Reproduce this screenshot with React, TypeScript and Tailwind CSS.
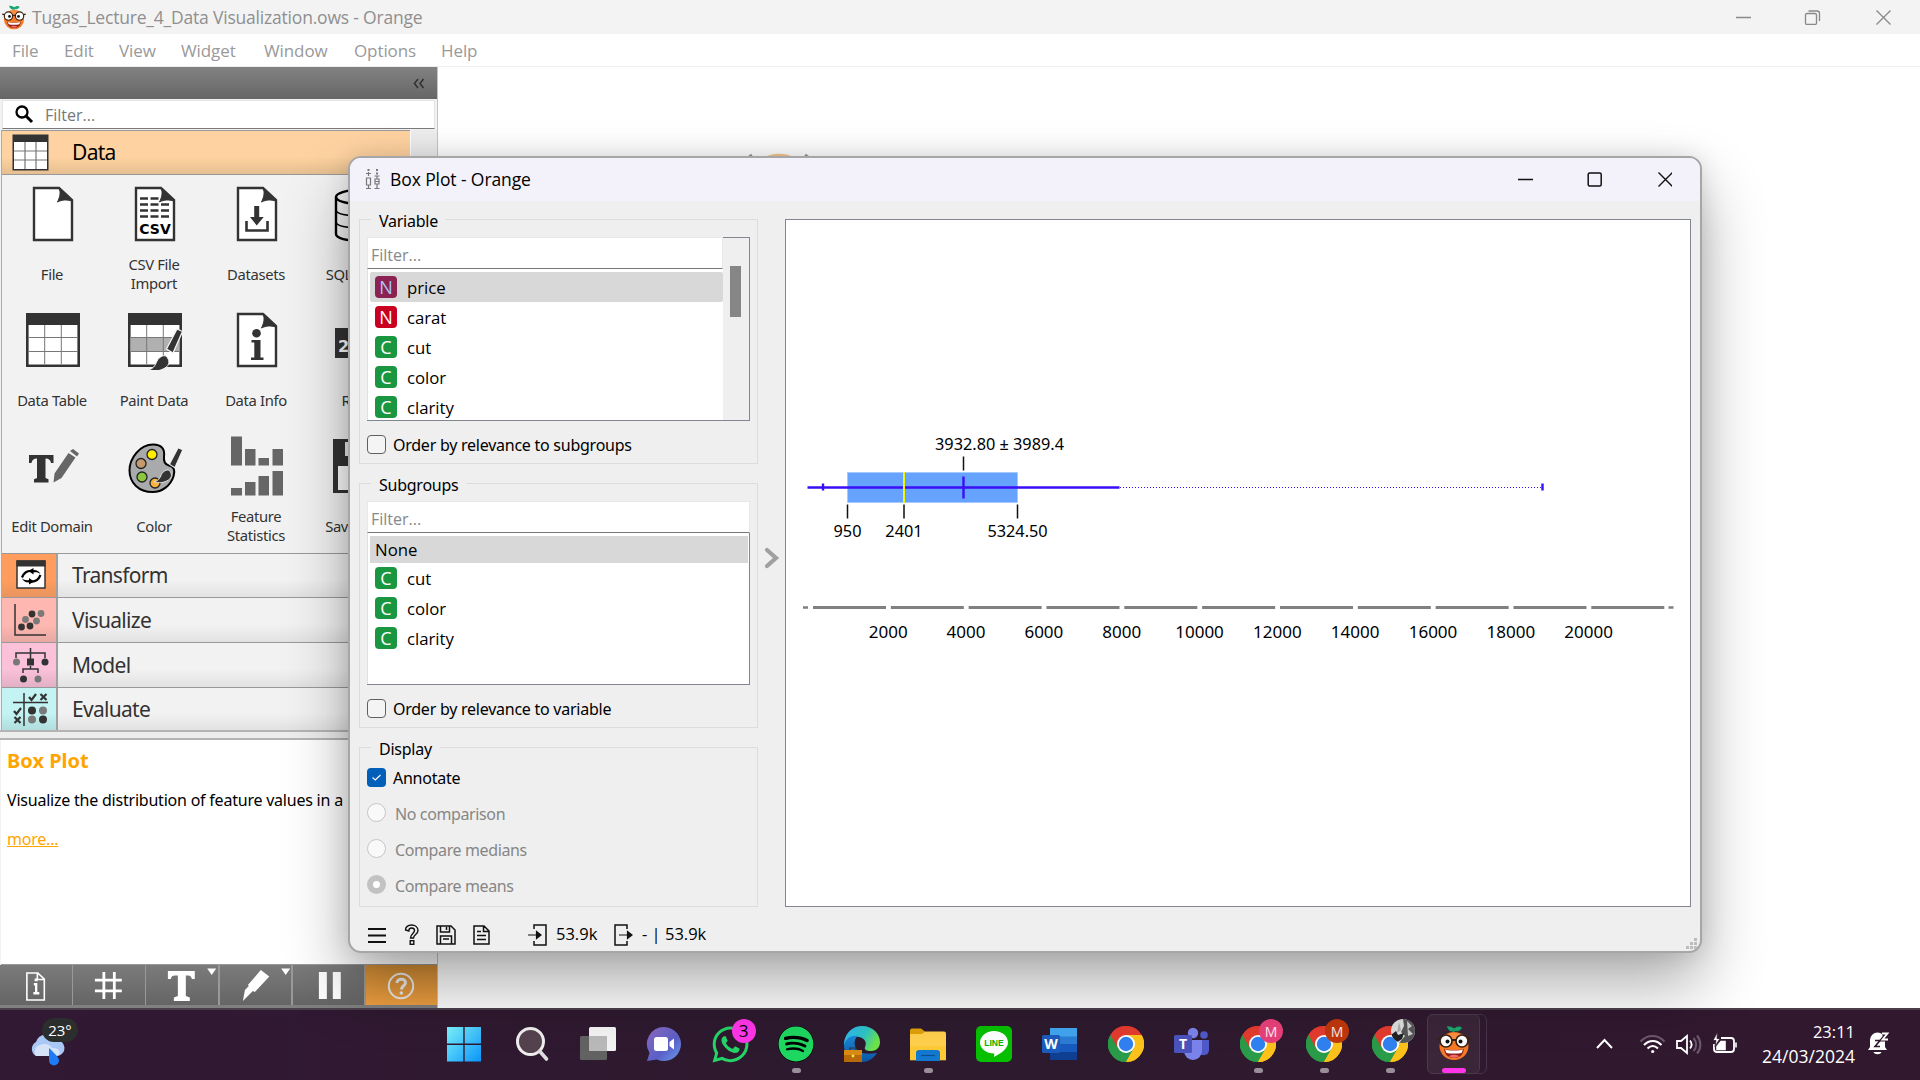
import React from "react";
import { FaWhatsapp, FaSpotify } from "react-icons/fa";

const INK = "#333333";

function OrangeFace({ className }: { className: string }) {
  return (
    <svg viewBox="0 0 34 36" className={className}>
      <path d="M17 7V3M17 5c-2-3-5-3-6-3 1 3 3 4 6 4M18 4c2-2 5-2 6-1-1 2-4 3-6 2" stroke="#16a36a" strokeWidth="1.6" fill="#22b573" />
      <ellipse cx="17" cy="21" rx="14.500" ry="14" fill="#f77a26" />
      <ellipse cx="17" cy="12" rx="9" ry="4" fill="#ff8f40" />
      <circle cx="9" cy="16" r="6" fill="#fff" stroke="#3b2314" strokeWidth="1.700" />
      <circle cx="25" cy="16" r="6" fill="#fff" stroke="#3b2314" strokeWidth="1.700" />
      <path d="M15 15h4M0 13l3.500 1M34 13l-3.500 1" stroke="#3b2314" strokeWidth="1.800" />
      <circle cx="10.500" cy="16.500" r="2" fill="#111" />
      <circle cx="23.500" cy="16.500" r="2" fill="#111" />
      <path d="M7 24c3 1.500 17 1.500 20 0-1 6.500-5 9-10 9s-9-2.500-10-9z" fill="#8c1f1a" />
      <path d="M8 24.500c3 1.400 15 1.400 18 0l-1.300 3.200c-4 1.200-11.400 1.200-15.400 0z" fill="#fff" />
      <path d="M12 31.300c2-2 8-2 10 0-3 2-7 2-10 0z" fill="#f26b6b" />
    </svg>
  );
}

function Sheet({ children }: { children?: React.ReactNode }) {
  return (
    <>
      <path d="M11 4h25l13 12v40H11z" fill="#fff" stroke={INK} strokeWidth="2.4" />
      <path d="M36 4c2 4 1 9-1.500 14 5-2.500 9-2.500 14.500-1L36 4z" fill={INK} stroke={INK} strokeWidth="1" />
      {children}
    </>
  );
}

function TableGrid({ painted }: { painted?: boolean }) {
  return (
    <>
      <rect x="3" y="3" width="54" height="54" fill={INK} />
      <rect x="5.600" y="15" width="48.800" height="39.500" fill="#fff" />
      {painted && <rect x="5.600" y="27.500" width="48.800" height="14" fill="#b0b0b0" />}
      <path d="M5.600 27.500h48.800M5.600 41.500h48.800M21.700 15v39.500M38.300 15v39.500" stroke="#777" strokeWidth="1" />
    </>
  );
}

function Brush({ transform }: { transform?: string }) {
  return (
    <g transform={transform}>
      <path d="M52 19l5.500 2.500L48 43l-6.500-4z" fill={INK} stroke="#f2f2f2" strokeWidth="1.300" />
      <path d="M41 46c4 4 4 9-1 12-5 3-11 4-17 2 5-1 7-4 9-9 2-4 6-6 9-5z" fill={INK} stroke="#f2f2f2" strokeWidth="1" />
    </g>
  );
}

const icons: Record<string, React.ReactNode> = {
  File: <Sheet />,
  "CSV File Import": (
    <Sheet>
      <path d="M15 14.500h19M15 20.500h29M15 26.500h29M15 32.500h29" stroke={INK} strokeWidth="2.600" strokeDasharray="8 2.500" />
      <text x="30" y="50" textAnchor="middle" className="font-['DejaVu_Sans',sans-serif] text-[14px] font-bold">CSV</text>
    </Sheet>
  ),
  Datasets: (
    <Sheet>
      <path d="M27.200 22h5v11h4.500L29.700 41.500 23 33h4.200z" fill={INK} />
      <path d="M19.500 37v9.500h21V37" fill="none" stroke={INK} strokeWidth="2.600" />
    </Sheet>
  ),
  "SQL Table": (
    <g fill="none" stroke="#000" strokeWidth="2">
      <ellipse cx="30" cy="13" rx="23" ry="7" strokeWidth="2.400" />
      <path d="M7 13v37c0 9 46 9 46 0V13" strokeWidth="2.400" />
      <path d="M7 26c0 8 46 8 46 0M7 38c0 8 46 8 46 0" strokeWidth="1.500" />
    </g>
  ),
  "Data Table": <TableGrid />,
  "Paint Data": (
    <>
      <TableGrid painted />
      <Brush />
    </>
  ),
  "Data Info": (
    <Sheet>
      <circle cx="29.500" cy="23.300" r="4.300" fill={INK} />
      <path d="M24.500 30h9v17.500h3V50H24v-2.500h3.300v-15h-2.800z" fill={INK} />
    </Sheet>
  ),
  Rank: (
    <>
      <rect x="6" y="18" width="50" height="30" fill={INK} />
      <text x="9" y="42" fill="#fff" className="font-['DejaVu_Sans',sans-serif] text-[16px] font-bold">2</text>
    </>
  ),
  "Edit Domain": (
    <>
      <path d="M6 19h24.500v8h-2.500c-.5-3-2-4.500-5.500-4.500V42l3 1.300v3.200H11v-3.200l3-1.300V22.500c-3.500 0-5 1.500-5.500 4.500H6z" fill={INK} />
      <path d="M45.500 17l7 4.500L38.500 42l-8 4.500 1-9zM47 15l3-2 6 4.500-2 3z" fill="#666" />
    </>
  ),
  Color: (
    <>
      <path d="M28 8.500c9 0 12 5 11 12-.6 5 1 8 5 9 5 1 6.500 5 4.500 11-3 9-11 15.500-21 15.500C14 56 4.500 47 4.500 34.500S15 8.500 28 8.500z" fill="#a9aaac" stroke="#000" strokeWidth="2" />
      <g stroke="#222" strokeWidth="1.300">
        <circle cx="27" cy="18.500" r="5" fill="#ffed00" />
        <circle cx="16" cy="27.500" r="5" fill="#c69a6d" />
        <circle cx="17" cy="41" r="5" fill="#8cc63f" />
        <circle cx="30" cy="47" r="5" fill="#fbb03b" />
      </g>
      <Brush transform="translate(10 -4) scale(.83)" />
    </>
  ),
  "Feature Statistics": (
    <g fill="#666">
      <path d="M4 .500h11v29H4zM18 13h10.500v16.500H18zM31.500 22H42v7.500H31.500zM45.500 13H56v16.500H45.500z" />
      <path d="M4 52h11v7.500H4zM18 46h10.500v13.500H18zM31.500 40H42v19.500H31.500zM45.500 35H56v24.500H45.500z" />
    </g>
  ),
  "Save Data": (
    <>
      <rect x="4" y="3" width="54" height="54" fill={INK} />
      <rect x="16" y="6" width="30" height="14" fill="#eee" />
      <rect x="9" y="30" width="43" height="24" fill="#fff" />
    </>
  ),
};

function Palette() {
  const cells = Object.keys(icons);
  return (
    <div className="grid w-[408px] grid-cols-4 grid-rows-[repeat(3,126px)]">
      {cells.map((name) => (
        <div key={name} className="flex flex-col items-center">
          <div className="flex h-[78px] items-center">
            <svg width="60" height="60" viewBox="0 0 60 60">{icons[name]}</svg>
          </div>
          <div className="flex h-[42px] w-[84px] -translate-x-px items-center justify-center text-center text-[14.800px] leading-[19px] tracking-[-0.350px] text-[#333]">{name}</div>
        </div>
      ))}
    </div>
  );
}

function Categories() {
  const rows = [
    {
      name: "Transform", h: "h-[44px]", bg: "bg-linear-to-b from-[#ff9d5e] from-60% to-[#e8945e]",
      icon: (
        <>
          <rect x="4" y="3" width="28" height="27" fill="#fff" stroke={INK} strokeWidth="1.500" />
          <rect x="3.500" y="2.500" width="29" height="6" fill={INK} />
          <path d="M9 19.500c2-5 5-7 10-6.500" fill="none" stroke="#000" strokeWidth="2.200" />
          <path d="M27.500 17c-2 5-5 7-10 6.500" fill="none" stroke="#000" strokeWidth="2.200" />
          <path d="M15.500 13l5-3v2c4 0 6 2 7 4-2-1.500-4-2-7-1.500v2zM21 23.500l-5 3v-2c-4 0-6-2-7-4 2 1.500 4 2 7 1.500v-2z" />
        </>
      ),
    },
    {
      name: "Visualize", h: "h-[45px]", bg: "bg-linear-to-b from-[#ffb7b1] from-60% to-[#e8a8a2]",
      icon: (
        <>
          <path d="M2 2v31h31" fill="none" stroke={INK} strokeWidth="1.500" />
          <g fill={INK}><circle cx="8.500" cy="25" r="3.400" /><circle cx="17" cy="24" r="3.400" /><circle cx="19" cy="12" r="3.400" /></g>
          <g fill="#7a7a7a"><circle cx="12.500" cy="17.500" r="3.400" /><circle cx="23.500" cy="19" r="3.400" /><circle cx="28" cy="11.500" r="3.400" /></g>
        </>
      ),
    },
    {
      name: "Model", h: "h-[45px]", bg: "bg-linear-to-b from-[#fac1d9] from-60% to-[#e3b0c6]",
      icon: (
        <>
          <path d="M3 11V6h29v5M17.500 1v12M10 26v-4h15v4M17.500 19v3" fill="none" stroke={INK} strokeWidth="1.500" />
          <rect x="14" y="11.500" width="7" height="7" fill={INK} />
          <circle cx="32" cy="15" r="3.500" fill={INK} /><circle cx="10.500" cy="32" r="3.500" fill={INK} />
          <circle cx="3.500" cy="15" r="3.500" fill="#777" /><circle cx="25" cy="32" r="3.500" fill="#777" />
        </>
      ),
    },
    {
      name: "Evaluate", h: "h-[43px]", bg: "bg-linear-to-b from-[#c3f3f3] from-60% to-[#b0dddd]",
      icon: (
        <>
          <path d="M11 2v33M0 11.500h35" stroke={INK} strokeWidth="1.500" />
          <g fill="none" stroke={INK} strokeWidth="2.200">
            <path d="M16 6l2.500 3L23 3M27.500 3l6 6M33.500 3l-6 6M1 20l2.500 3L8 17M1.500 26l6 6M7.500 26l-6 6" />
          </g>
          <circle cx="19" cy="19.500" r="4" fill={INK} /><circle cx="30" cy="28.500" r="4" fill={INK} />
          <circle cx="30" cy="19.500" r="4" fill="#7a7a7a" /><circle cx="19" cy="28.500" r="4" fill="#7a7a7a" />
        </>
      ),
    },
  ];
  return (
    <>
      {rows.map((r) => (
        <div key={r.name} className={`flex border-t border-[#999] ${r.h}`}>
          <div className={`flex w-[56px] items-center justify-center border-r-2 border-[#a0a0a0] pl-[3px] ${r.bg}`}>
            <svg width="36" height="36" viewBox="0 0 36 36">{r.icon}</svg>
          </div>
          <div className="flex flex-1 items-center bg-linear-to-b from-[#f2f2f2] from-60% to-[#e2e2e2] pt-px pl-[14px] text-[21px] tracking-[-0.700px] text-[#333]">{r.name}</div>
        </div>
      ))}
    </>
  );
}

function DockToolbar() {
  const glyphs = [
    <path d="M27 8h11l6.500 6v21H27zM37.500 8v6.500h7" fill="none" stroke="#fff" strokeWidth="1.600" />,
    <path d="M31 7v27M41.500 7v27M22 15h27M22 26h27" stroke="#fff" strokeWidth="2.800" />,
    <path d="M22 6h27v8h-3c-.5-3-2-3.500-6-3.500V31l4 1.500V36H28v-3.500l4-1.500V10.500c-5 0-6.500.5-7 3.500h-3z" fill="#fff" />,
    <path d="M41 5l8.500 6.500L35 27l-2-1-10 10 2-11 4-4-1-1z" fill="#fff" />,
    <path d="M26 7h8v27h-8zM40 7h8v27h-8z" fill="#fff" />,
  ];
  return (
    <div className="flex h-[43px] border-b-[3px] border-[#808080] bg-[#999]">
      {glyphs.map((g, i) => (
        <div key={i} className="mr-[1.500px] flex w-[71.700px] items-center justify-center bg-linear-to-b from-[#7b7b7b] to-[#656565]">
          <svg width="72" height="40" viewBox="0 0 72 40">
            {g}
            {i === 0 && <path d="M34 18h3.500v9h2v2.500H33.500V27h1.700v-6.500H34zM34.800 13.500h3v2.800h-3z" fill="#fff" />}
            {(i === 2 || i === 3) && <path d="M61.500 3.500h9L66 10z" fill="#fff" />}
          </svg>
        </div>
      ))}
      <div className="flex flex-1 items-center justify-center bg-linear-to-b from-[#cf8c35] to-[#f0a040]">
        <svg width="28" height="28" viewBox="0 0 28 28" className="mt-[2px]">
          <circle cx="14" cy="14" r="12.200" fill="none" stroke="#eee" strokeWidth="2" />
          <path d="M10 11c0-5 8.500-5 8.500-.5 0 3-4 3.500-4 7" fill="none" stroke="#eee" strokeWidth="3" />
          <circle cx="14.300" cy="21" r="1.800" fill="#eee" />
        </svg>
      </div>
    </div>
  );
}

function Dock() {
  return (
    <aside className="flex w-[438px] flex-col border-r border-[#c4c4c4] bg-[#f2f2f2] font-['Noto_Sans',sans-serif]">
      <div className="flex h-[32px] items-center justify-end bg-linear-to-b from-[#828282] to-[#666] pr-[12px]">
        <svg width="12" height="11" viewBox="0 0 12 11" className="mt-px">
          <path d="M5 1L1.500 5.500 5 10M10.500 1L7 5.500l3.500 4.500" fill="none" stroke="#333" strokeWidth="1.600" />
        </svg>
      </div>
      <div className="mx-[2px] mt-px flex h-[29px] items-center border border-b-[#7a7a7a] border-[#e4e4e4] bg-white pl-[12px] font-['Open_Sans',sans-serif]">
        <svg width="19" height="19" viewBox="0 0 19 19">
          <circle cx="7" cy="7" r="5.500" fill="none" stroke="#000" strokeWidth="2.300" />
          <path d="M11 11l6 6" stroke="#000" strokeWidth="3" />
        </svg>
        <span className="pl-[11px] text-[16px] text-[#777]">Filter...</span>
      </div>
      <div className="mt-px ml-px flex h-[600px] flex-col border-l border-[#a9adad]">
        <div className="flex h-[45px]">
          <div className="flex w-[408px] items-center border-y border-[#999] bg-linear-to-b from-[#ffd3a1] from-60% to-[#e6bf90] pl-[10px] text-[21px] tracking-[-0.700px] text-black">
            <svg width="37" height="37" viewBox="0 0 37 37">
              <rect x=".5" y=".5" width="36" height="36" fill={INK} />
              <rect x="2" y="8" width="33" height="27" fill="#fff" />
              <path d="M2 17h33M2 26h33M13 8v27M24 8v27" stroke="#777" strokeWidth="1.200" />
            </svg>
            <span className="pl-[23px]">Data</span>
          </div>
          <div className="flex flex-1 justify-center border-l border-white bg-[#ececec] pt-[26px]">
            <div className="h-[6px] w-[10px] bg-[#777]" />
          </div>
        </div>
        <div className="h-[378px]"><Palette /></div>
        <Categories />
      </div>
      <div className="h-[10px] border-y-2 border-[#b4b4b4] bg-[#ededed]" />
      <div className="ml-px flex-1 border-b border-[#999] bg-white px-[6px] pt-[10px]">
        <div className="text-[20px] leading-[22px] font-bold text-[#ffa500]">Box Plot</div>
        <div className="pt-[16px] text-[16px] leading-[24px] tracking-[-0.220px] whitespace-nowrap text-black">Visualize the distribution of feature values in a</div>
        <div className="pt-[15px] text-[16px] leading-[24px] tracking-[-0.220px] text-[#ffa500] underline">more...</div>
      </div>
      <DockToolbar />
    </aside>
  );
}

function VarRow({ kind, name, selected }: { kind: "N" | "C"; name: string; selected?: boolean }) {
  const tint = kind === "C" ? "bg-[#1a9641] text-white" : selected ? "bg-[#8b2252] text-[#a9c8f5]" : "bg-[#ca0020] text-white";
  return (
    <div className={`flex h-[30px] items-center rounded-[2px] pl-[5px] ${selected ? "bg-[#d8d8d8]" : ""}`}>
      <div className={`flex size-[22px] items-center justify-center rounded-[4px] text-[18px] leading-[22px] ${tint}`}>{kind}</div>
      <span className="pt-[2px] pl-[10px] text-[16.800px] tracking-[-0.050px]">{name}</span>
    </div>
  );
}

function Group({ title, className, children }: { title: string; className: string; children: React.ReactNode }) {
  return (
    <fieldset className={`border border-[#dcdcdc] px-[7px] ${className}`}>
      <legend className="ml-[4px] h-[20px] px-[8px] text-[16px] leading-[24px] tracking-[-0.250px]">{title}</legend>
      {children}
    </fieldset>
  );
}

function FilterBox() {
  return (
    <div className="flex h-[32px] items-center border border-[#e8e8e8] border-b-[#777] bg-white pt-[3px] pl-[3px] font-['Open_Sans',sans-serif] text-[16px] text-[#888]">Filter...</div>
  );
}

function Check({ label, checked }: { label: string; checked?: boolean }) {
  return (
    <label className="flex items-center gap-[7px] tracking-[-0.250px]">
      {checked ? (
        <span className="flex size-[19px] items-center justify-center rounded-[4px] bg-[#005fb8]">
          <svg width="9" height="7" viewBox="0 0 9 7"><path d="M.5 3.500L3.300 6 8.500 1" fill="none" stroke="#fff" strokeWidth="1.100" /></svg>
        </span>
      ) : (
        <span className="size-[19px] rounded-[4px] border border-[#606060] bg-[#f4f4f4]" />
      )}
      <span className="pt-[2px] leading-[20px]">{label}</span>
    </label>
  );
}

function Radio({ label, on }: { label: string; on?: boolean }) {
  return (
    <label className="flex h-[36px] items-center gap-[9px] tracking-[-0.380px] text-[#868686]">
      {on ? (
        <span className="size-[19px] rounded-full border-[6px] border-[#c2c2c2] bg-white" />
      ) : (
        <span className="size-[19px] rounded-full border border-[#c6c6c6] bg-[#f9f9f9]" />
      )}
      <span className="pt-[3px] leading-[20px]">{label}</span>
    </label>
  );
}

function BoxChart() {
  const ticks = Array.from({ length: 10 }, (_, i) => i);
  return (
    <svg width="903" height="686" viewBox="786 220 903 686" className="block font-['Noto_Sans',sans-serif]">
      <rect x="847.500" y="472.500" width="170" height="30" fill="#66a3ff" stroke="#9cc4ff" strokeWidth=".6" />
      <g stroke="#3a0ff5">
        <path d="M807.500 487.500H1119.500M823 483.500v7M963.500 476.500v22M1542.500 483.500v7" strokeWidth="2.400" />
        <path d="M1120 487.500H1541" strokeWidth="1" strokeDasharray="1 2" />
      </g>
      <path d="M904 472v31" stroke="#f5f500" strokeWidth="2" />
      <path d="M847.500 504.500v14M904 504.500v14M1017.500 504.500v14M963.500 456.500v14" stroke="#111" strokeWidth="1.500" />
      <g textAnchor="middle" className="text-[16.300px]">
        <text x="847.500" y="537">950</text>
        <text x="904" y="537">2401</text>
        <text x="1017.500" y="537">5324.50</text>
        <text x="999.500" y="450">3932.80 ± 3989.4</text>
      </g>
      <path d="M803 607.500h5M1668.500 607.500h5" stroke="#808080" strokeWidth="2.600" />
      {Array.from({ length: 11 }, (_, i) => (
        <path key={i} d={`M${813 + i * 77.830} 607.500h73`} stroke="#808080" strokeWidth="3" />
      ))}
      <g textAnchor="middle" className="text-[17px]">
        {ticks.map((i) => (
          <text key={i} x={888.2 + i * 77.83} y="638">{(i + 1) * 2000}</text>
        ))}
      </g>
    </svg>
  );
}

function StatusBar() {
  return (
    <div className="flex h-[41px] items-center pt-[8px] pl-[18px] font-['Open_Sans',sans-serif] text-[16.500px]">
      <svg width="18" height="16" viewBox="0 0 18 16"><path d="M0 2h18M0 8.500h18M0 15h18" stroke="#111" strokeWidth="2" /></svg>
      <svg width="16" height="22" viewBox="0 0 16 22" className="ml-[18px]">
        <path d="M1.500 6C1.500 3 4 1 7.500 1s6.500 2 6.500 5.500c0 4-4.500 4-4.500 7.500h-3c0-4.500 4-4.500 4-7.500C10.500 4.800 9 4 7.500 4S4.800 5 4.800 7z" fill="none" stroke="#111" strokeWidth="1.400" />
        <rect x="6.200" y="16.700" width="3.600" height="3.600" fill="none" stroke="#111" strokeWidth="1.400" />
      </svg>
      <svg width="20" height="20" viewBox="0 0 20 20" className="ml-[16px]">
        <path d="M1 1h14l4 4v14H1zM4.500 1v6h9V1M4.500 19v-8h11v8M10.500 2v3M7 14h6" fill="none" stroke="#111" strokeWidth="1.500" />
      </svg>
      <svg width="17" height="20" viewBox="0 0 17 20" className="ml-[17px]">
        <path d="M1 1h10l5 5v13H1zM10.500 1v5.500H16M4 6.500h4M4 10.500h9M4 14.500h9" fill="none" stroke="#111" strokeWidth="1.500" />
      </svg>
      <svg width="20" height="22" viewBox="0 0 20 22" className="ml-[38px]">
        <path d="M6 5V1h12v20H6v-4" fill="none" stroke="#111" strokeWidth="1.500" />
        <path d="M0 11h10M8.500 7.500l4.500 3.500-4.500 3.500z" fill="#111" stroke="#111" strokeWidth="1.200" />
      </svg>
      <span className="w-[66px] pl-[8px]">53.9k</span>
      <svg width="20" height="22" viewBox="0 0 20 22">
        <path d="M13 5V1H1v20h12v-4" fill="none" stroke="#111" strokeWidth="1.500" />
        <path d="M5 11h10M13.500 7.500l4.500 3.500-4.500 3.500z" fill="#111" stroke="#111" strokeWidth="1.200" />
      </svg>
      <span className="pl-[8px] whitespace-pre">- | 53.9k</span>
      <svg width="12" height="12" viewBox="0 0 12 12" className="mt-[18px] mr-[2px] ml-auto">
        <path d="M8 0h3v3H8zM4 4h3v3H4zM8 4h3v3H8zM0 8h3v3H0zM4 8h3v3H4zM8 8h3v3H8z" fill="#bdbdbd" />
      </svg>
    </div>
  );
}

function Dialog() {
  return (
    <section className="absolute top-[156px] left-[348px] flex h-[797px] w-[1354px] flex-col overflow-hidden rounded-[13px] border-2 border-[#a6a6a6] bg-[#efefef] font-['Noto_Sans',sans-serif] text-[16px] text-black shadow-[0_32px_64px_rgba(0,0,0,0.32),0_0_24px_rgba(0,0,0,0.12)]">
      <header className="flex h-[43px] items-center bg-[#f3f1f9] pb-[2px] pl-[15px] font-['Open_Sans',sans-serif]">
        <svg width="16" height="22" viewBox="0 0 16 22">
          <path d="M3.500 4v4M1 5.500h5M1.500 10h4v7h-4zM3.500 17v3M1 20.500h5M12 8v3M10 11h4v5h-4zM9.500 13.500h5M12 16v4M9.500 20.500h5M9.500 8h5" fill="none" stroke="#777" strokeWidth="1.200" />
          <path d="M2.500 1h2v2h-2zM11 1h2v2h-2zM11 4.500h2v2h-2z" fill="#777" />
        </svg>
        <span className="pt-px pl-[9px] text-[17.500px] tracking-[-0.100px]">Box Plot - Orange</span>
        <svg width="154" height="16" viewBox="0 0 154 16" className="mr-[28px] ml-auto">
          <path d="M0 8.500h15M140.500 1.500l14 14M154.500 1.500l-14 14" stroke="#111" strokeWidth="1.400" />
          <rect x="70.200" y="2" width="13" height="13" rx="1.500" fill="none" stroke="#111" strokeWidth="1.500" />
        </svg>
      </header>
      <div className="flex h-[709px] pl-[9px]">
        <div className="flex w-[399px] flex-col gap-[9px] pt-[8px]">
          <Group title="Variable" className="h-[255px]">
            <div className="mt-[7px] flex h-[185px] border-b border-[#82868f]">
              <div className="mt-px flex-1 overflow-hidden">
                <FilterBox />
                <div className="border-l border-[#e0e0e0] bg-white pt-[3px] pl-[2px] font-['Open_Sans',sans-serif]">
                  <VarRow kind="N" name="price" selected />
                  <VarRow kind="N" name="carat" />
                  <VarRow kind="C" name="cut" />
                  <VarRow kind="C" name="color" />
                  <VarRow kind="C" name="clarity" />
                </div>
              </div>
              <div className="mt-px flex w-[27px] justify-center border-t border-r border-[#82868f] pt-[28px] pr-[2px]">
                <div className="h-[51px] w-[11px] bg-[#868686]" />
              </div>
            </div>
            <div className="mt-[12px]"><Check label="Order by relevance to subgroups" /></div>
          </Group>
          <Group title="Subgroups" className="h-[255px]">
            <div className="mt-[8px] h-[184px] border-b border-[#82868f]">
              <FilterBox />
              <div className="h-[151px] border-r border-l border-r-[#82868f] border-l-[#e0e0e0] bg-white pt-[3px] pr-px pl-[2px] font-['Open_Sans',sans-serif]">
                <div className="flex h-[27px] items-center bg-[#d8d8d8] pl-[5px] text-[16.800px]">None</div>
                <VarRow kind="C" name="cut" />
                <VarRow kind="C" name="color" />
                <VarRow kind="C" name="clarity" />
              </div>
            </div>
            <div className="mt-[12px]"><Check label="Order by relevance to variable" /></div>
          </Group>
          <Group title="Display" className="h-[170px]">
            <div className="pt-[9px] pb-[6px]"><Check label="Annotate" checked /></div>
            <Radio label="No comparison" />
            <Radio label="Compare medians" />
            <Radio label="Compare means" on />
          </Group>
        </div>
        <div className="flex w-[27px] items-center justify-center">
          <svg width="16" height="24" viewBox="0 0 16 24" className="mt-[5px]">
            <path d="M3 4l9 8-9 8" fill="none" stroke="#a0a0a0" strokeWidth="4.200" strokeLinecap="round" />
          </svg>
        </div>
        <div className="mt-[18px] h-[688px] w-[906px] border border-[#82868f] bg-white">
          <BoxChart />
        </div>
      </div>
      <StatusBar />
    </section>
  );
}

function Chrome() {
  return (
    <svg width="36" height="36" viewBox="0 0 36 36">
      <path d="M18 18L2.400 9A18 18 0 0 1 33.600 9z" fill="#e33b2e" />
      <path d="M18 18L33.600 9A18 18 0 0 1 18 36z" fill="#fcc21b" />
      <path d="M18 18V36A18 18 0 0 1 2.400 9z" fill="#2a9b48" />
      <path d="M18 9h15.600L36 18 25.800 22.500 18 36V26z" fill="#fcc21b" />
      <path d="M2.400 9l7.800 13.500L18 27l7.800-4.500L18 36A18 18 0 0 1 2.400 9z" fill="#2a9b48" />
      <path d="M18 9h15.600A18 18 0 0 0 2.400 9l7.800 13.500z" fill="#e33b2e" />
      <path d="M33.600 9A18 18 0 0 1 18 36l7.800-13.500V9z" fill="#fcc21b" />
      <circle cx="18" cy="18" r="9" fill="#fff" />
      <circle cx="18" cy="18" r="7.200" fill="#3080f0" />
    </svg>
  );
}

function ChromeProfile({ tint }: { tint: string }) {
  return (
    <div className="relative">
      <Chrome />
      <div className={`absolute -top-[7px] left-[19px] flex size-[24px] items-center justify-center overflow-hidden rounded-full text-[14px] text-white/90 ${tint}`}>
        {tint === "bg-[#ddd]" ? (
          <svg width="24" height="24" viewBox="0 0 24 24">
            <path d="M12 0l12 0v24H8l6-7-4-4 3-6z" fill="#555" />
            <path d="M16 2l5 5-4 3 5 5-5 2z" fill="#ccc" />
            <path d="M0 16l5-4 2 4 6-2-2 6-6 4z" fill="#222" />
            <path d="M8 3l2 8-4 3z" fill="#aaa" />
          </svg>
        ) : "M"}
      </div>
    </div>
  );
}

function Taskbar() {
  const apps: { icon: React.ReactNode; open?: boolean }[] = [
    { icon: (
      <svg width="36" height="36" viewBox="0 0 36 36">
        <defs><linearGradient id="win" x1="0" y1="0" x2="1" y2="1"><stop offset="0" stopColor="#7df3fd" /><stop offset="1" stopColor="#0a94f8" /></linearGradient></defs>
        <path d="M1 1h16.300v16.500H1zM18.700 1H35v16.500H18.700zM1 19h16.300v16.500H1zM18.700 19H35v16.500H18.700z" fill="url(#win)" />
      </svg>) },
    { icon: (
      <svg width="36" height="36" viewBox="0 0 36 36">
        <circle cx="16.500" cy="15.500" r="13" fill="#54434f" stroke="#eee" strokeWidth="3" />
        <path d="M25.500 25l7 8" stroke="#ddd" strokeWidth="3.600" strokeLinecap="round" />
      </svg>) },
    { icon: (
      <svg width="38" height="36" viewBox="0 0 38 36">
        <rect x="1" y="10" width="27" height="24" rx="1.500" fill="#626262" />
        <rect x="10" y="1" width="27" height="24" rx="1.500" fill="#f3f3f3" />
        <rect x="10" y="10" width="18" height="15" fill="#b9b9b9" />
      </svg>) },
    { icon: (
      <svg width="36" height="36" viewBox="0 0 36 36">
        <defs><linearGradient id="chat" x1="0" y1="0" x2="1" y2="1"><stop offset="0" stopColor="#8b6bc0" /><stop offset=".6" stopColor="#5b5fc7" /><stop offset="1" stopColor="#6a9df0" /></linearGradient></defs>
        <path d="M18 1a17 17 0 1 1-7 32.500L1 35l2.500-8A17 17 0 0 1 18 1z" fill="url(#chat)" />
        <rect x="8" y="11" width="14" height="14" rx="2.500" fill="#fff" />
        <path d="M23.500 16l4.500-3.500v11L23.500 20z" fill="#fff" />
      </svg>) },
    { icon: (
      <div className="relative">
        <FaWhatsapp className="size-[41px] text-[#25d366]" />
        <div className="absolute -top-[5px] left-[22px] flex size-[24px] items-center justify-center rounded-full bg-[#ff35e8] text-[17px] text-black">3</div>
      </div>) },
    { open: true, icon: <div className="flex size-[36px] items-center justify-center rounded-full bg-black"><FaSpotify className="size-[36px] text-[#1ed760]" /></div> },
    { icon: (
      <svg width="36" height="36" viewBox="0 0 36 36">
        <defs>
          <linearGradient id="ea" x1="0" y1="0" x2="1" y2=".4"><stop offset="0" stopColor="#2fb5ee" /><stop offset=".6" stopColor="#2dc3c8" /><stop offset="1" stopColor="#6de24a" /></linearGradient>
          <linearGradient id="eb" x1="0" y1="0" x2="0" y2="1"><stop offset="0" stopColor="#1b87d8" /><stop offset="1" stopColor="#0b56a5" /></linearGradient>
        </defs>
        <path d="M0 16C2 6 9 0 18 0c11 0 18 8 18 16 0 6-4 9-9 9-4 0-7-1-6-4 2-4 0-9-6-10C9 10 3 13 0 20z" fill="url(#ea)" />
        <path d="M0 20C1 12 8 9 14 10c-3 2-4 6-3 10 2 7 9 9 22 7-4 6-9 9-15 9C8 36 0 29 0 20z" fill="url(#eb)" />
        <rect x="0" y="24" width="18" height="12" fill="#b86a08" />
        <path d="M0 24h18v5H0z" fill="#d98a12" />
        <path d="M6 24v-2h6v2" fill="none" stroke="#333" strokeWidth="1.200" />
        <circle cx="9" cy="30" r="1.400" fill="#ffe14a" />
      </svg>) },
    { open: true, icon: (
      <svg width="36" height="36" viewBox="0 0 36 36">
        <path d="M0 4.500A2 2 0 0 1 2 2.500h9l4 3-3 4H0z" fill="#e0a008" />
        <path d="M0 8h12l3-2.500h19a2 2 0 0 1 2 2V34H0z" fill="#ffd04d" />
        <path d="M0 20h36v14.500H0z" fill="#fdc528" opacity=".6" />
        <path d="M6 35V27a3 3 0 0 1 3-3h18a3 3 0 0 1 3 3v8z" fill="#1279cf" />
        <path d="M11 29.500h14" stroke="#0a4e8c" strokeWidth="1.200" />
      </svg>) },
    { icon: (
      <svg width="36" height="36" viewBox="0 0 36 36">
        <rect width="36" height="36" rx="5" fill="#06c000" />
        <path d="M18 5c8 0 14 5 14 11.500 0 6-7 11-14 14.500l.3-3.500C10 27.500 4 22.500 4 16.500S10 5 18 5z" fill="#fff" />
        <text x="18" y="20" textAnchor="middle" fill="#06b000" className="font-['Liberation_Sans',sans-serif] text-[8.500px] font-bold">LINE</text>
      </svg>) },
    { icon: (
      <svg width="36" height="36" viewBox="0 0 36 36">
        <rect x="8" y="2" width="27" height="32" rx="1.500" fill="#2b7cd3" />
        <path d="M8 2h27v8.500H8z" fill="#41a5ee" /><path d="M8 18h27v8H8z" fill="#185abd" /><path d="M8 26h27v8H8z" fill="#103f91" />
        <rect x="0" y="9" width="18" height="18" rx="1.500" fill="#1b5cbe" />
        <text x="9" y="23" textAnchor="middle" fill="#fff" className="font-['Open_Sans',sans-serif] text-[14px] font-bold">W</text>
      </svg>) },
    { icon: <Chrome /> },
    { icon: (
      <svg width="36" height="36" viewBox="0 0 36 36">
        <circle cx="19" cy="7" r="5.200" fill="#7b83eb" /><circle cx="30" cy="9" r="3.800" fill="#5059c9" />
        <path d="M22 14h13v10c0 6-8 7-11 2z" fill="#5059c9" />
        <path d="M10 14h18v11a9 9 0 0 1-18 0z" fill="#7b83eb" />
        <rect x="0" y="9" width="18" height="18" rx="1.500" fill="#4b53bc" />
        <text x="9" y="23" textAnchor="middle" fill="#fff" className="font-['Open_Sans',sans-serif] text-[14px] font-bold">T</text>
      </svg>) },
    { open: true, icon: <ChromeProfile tint="bg-[#e8407a]" /> },
    { open: true, icon: <ChromeProfile tint="bg-[#bf360c]" /> },
    { open: true, icon: <ChromeProfile tint="bg-[#ddd]" /> },
  ];
  return (
    <footer className="relative flex h-[72px] shrink-0 border-t-2 border-[#4c3f4c] bg-linear-to-r from-[#311833] via-[#2d1a2e] to-[#32182f] font-['Open_Sans',sans-serif]">
      <div className="flex w-[431px] pl-[28px]">
        <div className="relative mt-[20px] h-[34px] w-[38px]">
          <svg width="38" height="36" viewBox="0 0 38 36">
            <path d="M8 26a8 8 0 0 1 0-14A11 11 0 0 1 28 10a8 8 0 0 1 1 16z" fill="#a9c8f5" />
            <path d="M8 26a7 7 0 0 1 4-11c4-2 10-1 12 3 8-1 10 6 5 8z" fill="#d5e3f8" />
            <path d="M21 18c6 6 10 9 10 12.500a5 5 0 0 1-10 0z" fill="#1e7bf5" />
          </svg>
          <div className="absolute -top-[12px] left-[14px] flex h-[24px] w-[36px] items-center justify-center rounded-full bg-[#2b2e2d] text-[15px] text-white">23°</div>
        </div>
      </div>
      {apps.map((a, i) => (
        <div key={i} className="flex w-[66px] flex-col items-center pt-[16px] first-of-type:mr-0 nth-[2]:mr-[2px]">
          <div className="flex h-[36px] items-center">{a.icon}</div>
          {a.open && <div className="mt-[6px] h-[5px] w-[9px] rounded-full bg-[#9a8e9a]" />}
        </div>
      ))}
      <div className="mt-[4px] ml-[4px] flex h-[60px] w-[60px] rounded-[6px] border border-[#45344a] pr-[7px]">
        <div className="-m-px flex w-[53px] flex-col items-center rounded-[6px] border border-[#4b3a49] bg-[#3a2539] pt-[10px]">
          <OrangeFace className="h-[37px] w-[34px]" />
          <div className="mt-[7px] h-[5px] w-[24px] shrink-0 rounded-full bg-[#ff35e8]" />
        </div>
      </div>
      <div className="ml-auto flex items-center pb-[2px]">
        <svg width="142" height="26" viewBox="0 0 142 26" className="mr-[24px]" fill="none" stroke="#fff" strokeWidth="2">
          <path d="M1 17l7.500-8 7.500 8" />
          <path d="M44.500 10.500c7-7.500 17-7.500 24 0" stroke="#6b5a6b" />
          <path d="M48 14c5-5.500 12.500-5.500 17.500 0M51.500 17.500c3.500-3.500 7-3.500 10.500 0" />
          <circle cx="56.700" cy="20.500" r="1.600" fill="#fff" stroke="none" />
          <path d="M81 10h4l6-5v17l-6-5h-4z" strokeWidth="1.800" />
          <path d="M94 9.500c2 2.500 2 5.500 0 8" strokeWidth="1.800" />
          <path d="M97.500 7c3.500 4 3.500 9.500 0 13M101 4.500c4.500 5.500 4.500 13 0 18" stroke="#6b5a6b" />
          <path d="M125 7h10a3 3 0 0 1 3 3v8a3 3 0 0 1-3 3h-14a3 3 0 0 1-3-3v-5" strokeWidth="1.800" />
          <path d="M121 18.500v-3l4-5h4v8zM140 11.500v5" fill="#fff" strokeWidth="1.600" />
          <path d="M121.500 1l-4.500 8.500h3l-1 6 5-8h-3z" fill="#fff" stroke="#31182f" strokeWidth=".8" />
        </svg>
        <div className="flex flex-col items-end text-[16.500px] leading-[24px] text-white">
          <span>23:11</span>
          <span className="text-[17.500px]">24/03/2024</span>
        </div>
        <svg width="24" height="26" viewBox="0 0 24 26" className="mr-[29px] ml-[12px]">
          <path d="M1 19l2-3V9a7.500 7.500 0 0 1 15 0v7l2 3zM6.500 21h8c-1 3-7 3-8 0z" fill="#fff" />
          <path d="M8 9.500h5l-5 6h5" fill="none" stroke="#31182f" strokeWidth="1.600" />
          <path d="M15 2.500h5.500L15.500 8.500H21" fill="none" stroke="#31182f" strokeWidth="4" />
          <path d="M15 2.500h5.500L15.500 8.500H21" fill="none" stroke="#fff" strokeWidth="1.800" />
        </svg>
      </div>
    </footer>
  );
}

export default function App() {
  return (
    <div className="relative flex h-[1080px] w-[1920px] flex-col overflow-hidden bg-white">
      <header className="flex h-[34px] shrink-0 items-center bg-[#f3f3f3] pl-px font-['Open_Sans',sans-serif]">
        <OrangeFace className="h-[25px] w-[26px]" />
        <span className="pt-px pl-[5px] text-[17.500px] tracking-[-0.200px] text-[#8f8f8f]">Tugas_Lecture_4_Data Visualization.ows - Orange</span>
        <svg width="156" height="16" viewBox="0 0 156 16" className="mr-[28px] ml-auto" fill="none" stroke="#888" strokeWidth="1.300">
          <path d="M0 8.500h15M140.500 1.500l14 14M154.500 1.500l-14 14M72.500 2h8.500a2.500 2.500 0 0 1 2.500 2.500V12" />
          <rect x="69.500" y="4.500" width="11" height="11" rx="1.500" />
        </svg>
      </header>
      <nav className="flex h-[33px] shrink-0 items-center border-b border-[#eeeeee] pt-[2px] pl-[12px] font-['Open_Sans',sans-serif] text-[17px] tracking-[-0.100px] text-[#999]">
        <span className="w-[52px]">File</span>
        <span className="w-[55px]">Edit</span>
        <span className="w-[62px]">View</span>
        <span className="w-[83px]">Widget</span>
        <span className="w-[90px]">Window</span>
        <span className="w-[87px]">Options</span>
        <span>Help</span>
      </nav>
      <main className="flex min-h-0 flex-1">
        <Dock />
        <div className="flex-1 bg-white pt-[86px] pl-[309px]">
          <svg width="64" height="6" viewBox="0 0 64 6">
            <path d="M1 5l4-3M58 2l4 3" stroke="#8b979c" strokeWidth="3" />
            <path d="M14 6c10-7 26-7 36 0z" fill="#f5c48f" />
          </svg>
        </div>
      </main>
      <Taskbar />
      <Dialog />
    </div>
  );
}
